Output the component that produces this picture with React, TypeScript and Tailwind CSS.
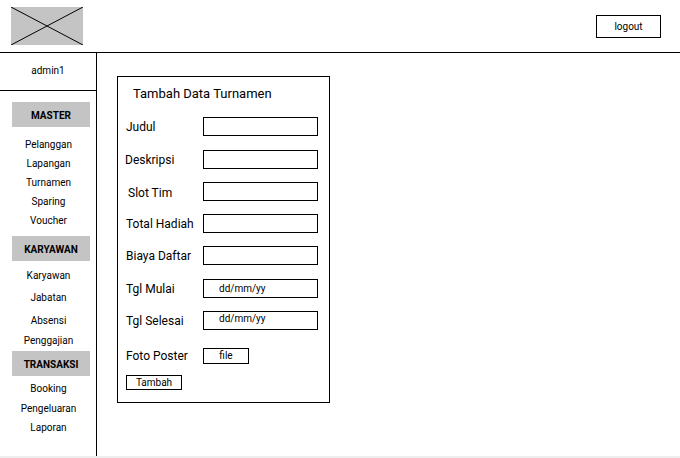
const master = [
    { label: "Pelanggan", h: "h-[19px]" },
    { label: "Lapangan", h: "h-[19px]" },
    { label: "Turnamen", h: "h-[19px]" },
    { label: "Sparing", h: "h-[19px]" },
    { label: "Voucher", h: "h-[19px]" },
]

const karyawan = [
    { label: "Karyawan", h: "h-[20px]" },
    { label: "Jabatan", h: "h-[24px]" },
    { label: "Absensi", h: "h-[22px]" },
    { label: "Penggajian", h: "h-[18px]" },
]

const transaksi = [
    { label: "Booking", h: "h-[19px]" },
    { label: "Pengeluaran", h: "h-[20px]" },
    { label: "Laporan", h: "h-[19px]" },
]

function SectionHeader({ title, className }: { title: string; className?: string }) {
    return (
        <div className={`mx-[12px] flex h-[25px] w-[78px] items-center justify-center bg-[#c4c4c4] pt-[1px] text-[10px] font-bold ${className ?? ""}`}>
            {title}
        </div>
    )
}

function MenuList({ items, className }: { items: { label: string; h: string }[]; className?: string }) {
    return (
        <ul className={className}>
            {items.map((item) => (
                <li key={item.label} className={`flex items-center justify-center pl-[1px] text-[10px] ${item.h}`}>
                    {item.label}
                </li>
            ))}
        </ul>
    )
}

function Field({ label, className, labelClass, children }: { label: string; className?: string; labelClass?: string; children?: React.ReactNode }) {
    return (
        <div className={`flex h-[19px] items-center ${className ?? ""}`}>
            <span className={`w-[85px] shrink-0 text-[12px] ${labelClass ?? "pl-[8px]"}`}>{label}</span>
            {children ?? <div className="h-[19px] w-[115px] border border-black" />}
        </div>
    )
}

export default function App() {
    return (
        <div className="w-[680px] bg-white text-black" style={{ fontFamily: "Roboto, 'Liberation Sans', sans-serif" }}>
            {/* Header */}
            <header className="flex h-[53px] items-start justify-between border-b border-black">
                <div className="ml-[11px] mt-[7px] h-[38px] w-[72px] bg-[#c4c4c4]">
                    <svg width="72" height="38" viewBox="0 0 72 38">
                        <line x1="0" y1="0" x2="72" y2="38" stroke="black" strokeWidth="1" />
                        <line x1="72" y1="0" x2="0" y2="38" stroke="black" strokeWidth="1" />
                    </svg>
                </div>
                <button className="mr-[19px] mt-[15px] flex h-[23px] w-[65px] items-center justify-center border border-black text-[10px]">
                    logout
                </button>
            </header>

            <div className="flex h-[403px]">
                {/* Sidebar */}
                <aside className="w-[97px] shrink-0 border-r border-black">
                    <div className="flex h-[38px] items-center justify-center border-b border-black pb-[2px] text-[10px]">admin1</div>
                    <SectionHeader title="MASTER" className="mt-[11px]" />
                    <MenuList items={master} className="pt-[8px]" />
                    <SectionHeader title="KARYAWAN" className="mt-[6px]" />
                    <MenuList items={karyawan} className="pt-[4px]" />
                    <SectionHeader title="TRANSAKSI" className="mt-[2px]" />
                    <MenuList items={transaksi} className="pt-[3px]" />
                </aside>

                {/* Content */}
                <main className="flex-1">
                    <div className="ml-[20px] mt-[23px] flex h-[327px] w-[213px] flex-col border border-black">
                        <div className="mt-[7px] flex h-[19px] items-center pl-[15px] text-[13px]">Tambah Data Turnamen</div>
                        <Field label="Judul" className="mt-[14px]" />
                        <Field label="Deskripsi" className="mt-[14px]" labelClass="pl-[7px]" />
                        <Field label="Slot Tim" className="mt-[13px]" labelClass="pl-[10px] pt-[3px]" />
                        <Field label="Total Hadiah" className="mt-[13px]" />
                        <Field label="Biaya Daftar" className="mt-[13px]" />
                        <Field label="Tgl Mulai" className="mt-[14px]">
                            <div className="flex h-[19px] w-[115px] items-center border border-black pl-[15px] text-[10px]">dd/mm/yy</div>
                        </Field>
                        <Field label="Tgl Selesai" className="mt-[13px]">
                            <div className="h-[19px] w-[115px] border border-black pl-[15px] text-[10px] leading-[14px]">dd/mm/yy</div>
                        </Field>
                        <Field label="Foto Poster" className="mt-[16px]">
                            <div className="flex h-[16px] w-[46px] items-center justify-center border border-black text-[10px]">file</div>
                        </Field>
                        <div className="ml-[8px] mt-[10px]">
                            <button className="flex h-[15px] w-[56px] items-center justify-center border border-black text-[10px]">Tambah</button>
                        </div>
                    </div>
                </main>
            </div>
            <div className="h-[2px] bg-[#eeeeee]" />
        </div>
    )
}
